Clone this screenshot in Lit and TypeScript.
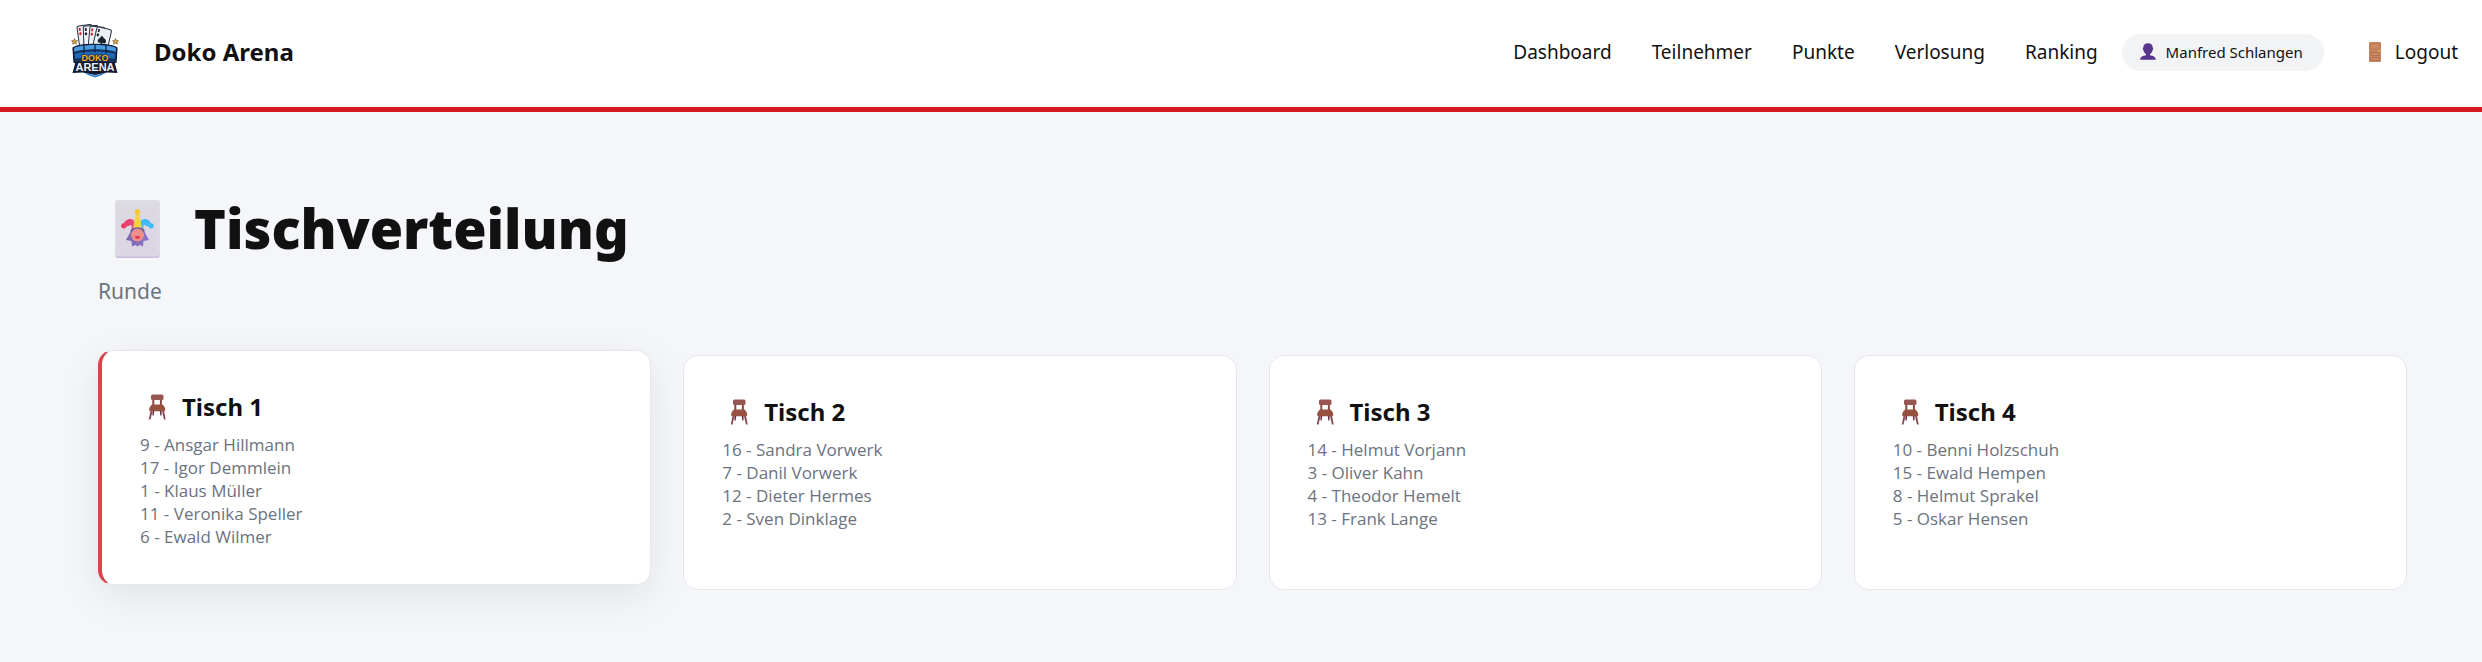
import { LitElement, html, css, svg } from "lit";
import { customElement, property } from "lit/decorators.js";

interface Player {
  nr: number;
  name: string;
}

interface GameTable {
  nr: number;
  active: boolean;
  players: Player[];
}

const TABLES: GameTable[] = [
  {
    nr: 1,
    active: true,
    players: [
      { nr: 9, name: "Ansgar Hillmann" },
      { nr: 17, name: "Igor Demmlein" },
      { nr: 1, name: "Klaus Müller" },
      { nr: 11, name: "Veronika Speller" },
      { nr: 6, name: "Ewald Wilmer" },
    ],
  },
  {
    nr: 2,
    active: false,
    players: [
      { nr: 16, name: "Sandra Vorwerk" },
      { nr: 7, name: "Danil Vorwerk" },
      { nr: 12, name: "Dieter Hermes" },
      { nr: 2, name: "Sven Dinklage" },
    ],
  },
  {
    nr: 3,
    active: false,
    players: [
      { nr: 14, name: "Helmut Vorjann" },
      { nr: 3, name: "Oliver Kahn" },
      { nr: 4, name: "Theodor Hemelt" },
      { nr: 13, name: "Frank Lange" },
    ],
  },
  {
    nr: 4,
    active: false,
    players: [
      { nr: 10, name: "Benni Holzschuh" },
      { nr: 15, name: "Ewald Hempen" },
      { nr: 8, name: "Helmut Sprakel" },
      { nr: 5, name: "Oskar Hensen" },
    ],
  },
];

const LINKS = ["Dashboard", "Teilnehmer", "Punkte", "Verlosung", "Ranking"];

// One playing card of the logo's fan, turned around its lower left corner.
const fanCard = (x: number, angle: number, pip: string) => svg`
  <g transform="translate(${x} 36) rotate(${angle})">
    <rect x="0" y="-23" width="15" height="25" rx="2" fill="#eef2f7" stroke="#27303f" stroke-width="1"></rect>
    <rect x="1.600" y="-21" width="1.800" height="3" fill=${pip}></rect>
    <path d="M2.500-17l1.500 1.900-1.500 1.900-1.500-1.900z" fill=${pip}></path>
  </g>`;

const logo = html`
  <svg class="logo" viewBox="0 3 48 72" aria-hidden="true">
    ${fanCard(9, -8, "#d8232a")} ${fanCard(13, -2, "#1c222e")} ${fanCard(17, 5, "#d8232a")}
    ${fanCard(21, 13, "#1c222e")}
    <path d="M31 22.500c1.500 2.900 4.600 3.900 4 6.500-.5 1.800-2.600 1.900-3.600.6l0 2.400h-2.600l1.100-2.500c-1.500.9-3.500 0-3.200-2 .3-2.100 2.800-2.500 4.300-5z" fill="#1b2230"></path>
    <path d="M3.500 25.500l1 2 2 .3-1.500 1.400.4 2-1.900-1-1.900 1 .4-2L.5 27.800l2-.3zM44.500 25.500l-1 2-2 .3 1.500 1.400-.4 2 1.900-1 1.900 1-.4-2 1.500-1.400-2-.3z" fill="#d9a63a" stroke="#4a3b22" stroke-width=".5"></path>
    <path d="M2 35c5-5 39-5 44 0l-1 14-21 9-21-9z" fill="#14315a" stroke="#0b1830" stroke-width="1.200"></path>
    <path d="M3 35c6-4 36-4 42 0l-.6 4c-7-3.600-34-3.600-40.800 0z" fill="#4b9be0"></path>
    <path d="M3.500 41c7-3.400 34-3.400 41 0l-.8 5c-7-2.500-32-2.500-39.400 0z" fill="#1f66b3"></path>
    <path d="M13 32v8M24 31.300v8M35 32v8" stroke="#0b1f3f" stroke-width="1.200"></path>
    <path d="M4.500 49h39l3 11-10-.5L24 62l-12.500-2.500L1.500 60z" fill="#101b33"></path>
    <path d="M13 59.500l11 3 11-3-4 2.500-7 2.500-7-2.500z" fill="#2c7fd0"></path>
    <text class="logo-top" x="24" y="48" text-anchor="middle">DOKO</text>
    <text class="logo-bottom" x="24" y="58" text-anchor="middle">ARENA</text>
  </svg>
`;

const jokerIcon = html`
  <svg class="joker" viewBox="0 0 78 72" aria-hidden="true">
    <defs>
      <linearGradient id="face" x1="0" y1="0" x2="0" y2="1">
        <stop offset="0" stop-color="#dcdae0"></stop>
        <stop offset=".94" stop-color="#dcd5e4"></stop>
        <stop offset="1" stop-color="#c8b6da"></stop>
      </linearGradient>
      <linearGradient id="pink" x1="0" y1="0" x2="1" y2="0">
        <stop offset="0" stop-color="#f3315f"></stop>
        <stop offset="1" stop-color="#e0568d"></stop>
      </linearGradient>
      <linearGradient id="hair" x1="0" y1="0" x2="1" y2="0">
        <stop offset="0" stop-color="#7768ad"></stop>
        <stop offset="1" stop-color="#9172cc"></stop>
      </linearGradient>
    </defs>
    <rect x="17" y="8" width="45" height="58" rx="3" fill="url(#face)"></rect>
    <rect x="18.500" y="9.500" width="42" height="54" rx="2.500" fill="none" stroke="#e2dfe8" stroke-width="1.500" opacity=".6"></rect>
    <path d="M32.500 40L28 48l5.500 1 .5 5.500 3.500-1.500 2 1.500 2-1.500 3.500 1.500.5-5.500 5.500-1-4.500-8z" fill="url(#hair)"></path>
    <path d="M38 36c0-5.500-2-9-5.500-9-4 0-5.500 2.500-6.500 4.200a2.700 2.700 0 1 0 2.500 3.300c2.700 0 3.500-2 4.500-1.500 1 .5.700 2.500.5 4.500z" fill="url(#pink)"></path>
    <path d="M41 36c0-5.500 2-9 5.500-9 4 0 5.500 2.500 6.500 4.200a2.700 2.700 0 1 1-2.500 3.300c-2.700 0-3.500-2-4.500-1.500-1 .5-.7 2.500-.5 4.500z" fill="#3fbcf6"></path>
    <path d="M38 20h3l3 17h-9z" fill="#f5d244"></path>
    <circle cx="39.500" cy="19.800" r="2.700" fill="#f3c832"></circle>
    <path d="M32.500 38c3-3.700 11-3.700 14 0v3h-14z" fill="#6f5aae"></path>
    <circle cx="39.500" cy="43" r="6.500" fill="#eb9088"></circle>
    <path d="M36.900 44h5.200c-.2 2.200-1.200 3-2.600 3s-2.400-.8-2.600-3z" fill="#e2365c"></path>
  </svg>
`;

const chairIcon = html`
  <svg class="chair" viewBox="0 0 34 26" aria-hidden="true">
    <path d="M12.500 16.500h1.700l-.5 5h-1.200zM19.800 16.500h1.700v5h-1.200z" fill="#5a2542"></path>
    <path d="M12.300 5h2v6h-2zM19.900 5h2v6h-2z" fill="#8a4b47"></path>
    <rect x="11" y=".5" width="12.500" height="5.500" rx="1.500" fill="#985653"></rect>
    <path d="M10.500 17l2 .2-2 8.300H8.800zM24 17l-2 .2 2 8.300h1.700z" fill="#87454c"></path>
    <path d="M12 10.500h10.500c1.700 1.500 2.800 3.500 2.800 5.300 0 .9-.6 1.500-1.500 1.500H10.600c-.9 0-1.500-.6-1.500-1.500 0-1.800 1.200-3.800 2.900-5.300z" fill="#96523f"></path>
  </svg>
`;

const personIcon = html`
  <svg class="person" viewBox="0 0 16 17" aria-hidden="true">
    <path d="M8 .3c3 0 4.800 1.800 4.800 4.600l.5.800-.7 1.500C12.200 9 11.200 10.300 10 11v1.200c2.800.3 5.600 1.300 5.900 4.500H.1C.4 13.500 3.200 12.500 6 12.200V11C4.800 10.300 3.800 9 3.400 7.200l-.7-1.500.5-.8C3.200 2.100 5 .3 8 .3z" fill="#56358a"></path>
  </svg>
`;

const doorIcon = html`
  <svg class="door" viewBox="0 0 24 20" aria-hidden="true">
    <rect x="6" y="0" width="12" height="20" rx="1" fill="#c9855f"></rect>
    <rect x="8" y="2" width="8" height="5" fill="#d08a64" stroke="#bd7656" stroke-width=".8"></rect>
    <rect x="8" y="10.500" width="8" height="3" fill="#d08a64" stroke="#b06c50" stroke-width=".8"></rect>
    <rect x="8" y="15.500" width="8" height="3" fill="#d08a64" stroke="#b06c50" stroke-width=".8"></rect>
    <circle cx="16" cy="9" r="1" fill="#f0b04e"></circle>
  </svg>
`;

@customElement("site-header")
export class SiteHeader extends LitElement {
  static styles = css`
    :host {
      display: block;
    }
    .bar {
      display: flex;
      align-items: center;
      justify-content: space-between;
      padding: 16px 24px 19px 71px;
      background: #fff;
      border-bottom: 5px solid #d71a20;
    }
    .brand {
      display: flex;
      align-items: center;
      gap: 35px;
      color: #111;
      font-size: 24px;
      line-height: 32px;
      font-weight: 700;
      text-decoration: none;
    }
    .logo {
      display: block;
      width: 48px;
      height: 72px;
    }
    .logo-top {
      font: 700 9px "Liberation Sans", sans-serif;
      fill: #f6b52c;
      stroke: #10182a;
      stroke-width: 1px;
      paint-order: stroke;
    }
    .logo-bottom {
      font: 700 11px "Liberation Sans", sans-serif;
      fill: #eef2f7;
      stroke: #10182a;
      stroke-width: 1px;
      paint-order: stroke;
    }
    .menu {
      display: flex;
      align-items: center;
    }
    .links {
      display: flex;
      gap: 40px;
      margin: 0;
      padding: 0;
      list-style: none;
    }
    .link {
      display: flex;
      align-items: center;
      gap: 8px;
      color: #111;
      font-size: 19px;
      line-height: 24px;
      text-decoration: none;
    }
    .user {
      display: flex;
      align-items: center;
      gap: 10px;
      margin: 0 39px 0 24px;
      padding: 6px 21px 7px 18px;
      border-radius: 20px;
      background: #f2f3f5;
      color: #111;
      font-size: 15px;
      line-height: 24px;
    }
    .person {
      width: 16px;
      height: 17px;
    }
    .door {
      width: 24px;
      height: 20px;
    }
  `;

  render() {
    return html`
      <header class="bar">
        <a class="brand" href="#">${logo}<span>Doko Arena</span></a>
        <nav class="menu">
          <ul class="links">
            ${LINKS.map((label) => html`<li><a class="link" href="#">${label}</a></li>`)}
          </ul>
          <span class="user">${personIcon}<span>Manfred Schlangen</span></span>
          <a class="link" href="#">${doorIcon}<span>Logout</span></a>
        </nav>
      </header>
    `;
  }
}

@customElement("table-card")
export class TableCard extends LitElement {
  @property({ attribute: false }) table!: GameTable;

  static styles = css`
    :host {
      display: grid;
    }
    .card {
      padding: 38px 38px 36px;
      border: 1px solid #e5e7eb;
      border-radius: 15px;
      background: #fff;
    }
    .active {
      border-left: 4px solid #dc444c;
      box-shadow: 0 12px 40px rgba(0, 0, 0, 0.08);
      transform: translateY(-5px);
    }
    .heading {
      display: flex;
      align-items: center;
      gap: 8px;
      margin: 0 0 8px;
      color: #111;
      font-size: 24px;
      line-height: 36px;
      font-weight: 700;
    }
    .chair {
      width: 34px;
      height: 26px;
    }
    .players {
      margin: 0;
      padding: 0;
      list-style: none;
      color: #6b7280;
      font-family: "Open Sans", sans-serif;
      font-size: 17px;
      line-height: 23px;
    }
  `;

  render() {
    const { nr, active, players } = this.table;
    return html`
      <article class="card ${active ? "active" : ""}">
        <h2 class="heading">${chairIcon}<span>Tisch ${nr}</span></h2>
        <ul class="players">
          ${players.map((p) => html`<li>${p.nr} - ${p.name}</li>`)}
        </ul>
      </article>
    `;
  }
}

@customElement("app-root")
export class AppRoot extends LitElement {
  static styles = css`
    :host {
      display: block;
      min-height: 100vh;
      background: #f4f6fa;
      font-family: "Noto Sans", "Open Sans", sans-serif;
    }
    .content {
      padding: 80px 75px 72px 98px;
    }
    .title {
      display: flex;
      align-items: center;
      gap: 18px;
      margin: 0 0 13px;
      color: #111;
      font-size: 54px;
      line-height: 72px;
      font-weight: 900;
    }
    .joker {
      width: 78px;
      height: 72px;
    }
    .subtitle {
      margin: 0 0 50px;
      color: #6c757d;
      font-size: 21px;
      line-height: 28px;
    }
    .tables {
      display: grid;
      grid-template-columns: repeat(auto-fit, minmax(420px, 1fr));
      gap: 32px;
    }
  `;

  render() {
    return html`
      <site-header></site-header>
      <main class="content">
        <h1 class="title">${jokerIcon}<span>Tischverteilung</span></h1>
        <p class="subtitle">Runde</p>
        <section class="tables">
          ${TABLES.map((t) => html`<table-card .table=${t}></table-card>`)}
        </section>
      </main>
    `;
  }
}
